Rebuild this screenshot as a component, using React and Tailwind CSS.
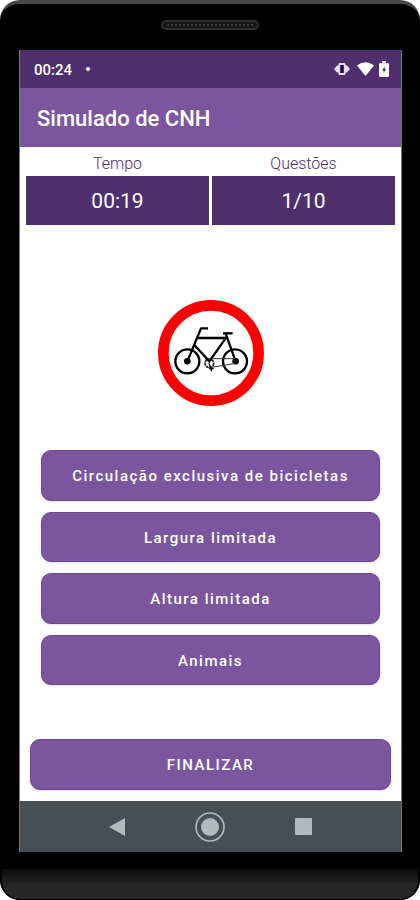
import React from "react";

const answers = [
  "Circulação exclusiva de bicicletas",
  "Largura limitada",
  "Altura limitada",
  "Animais",
];

function Speaker() {
  return (
    <div className="flex h-[50px] justify-center pt-5">
      <div className="flex h-[10px] w-[98px] items-center justify-center rounded-full border-2 border-[#303030] bg-[#161616]">
        <div className="w-[86px] border-t-2 border-dotted border-[#383838]" />
      </div>
    </div>
  );
}

function StatusBar() {
  return (
    <div className="flex h-[38px] items-center bg-[#4f2f6e] pr-3 pl-[14px] text-white">
      <span className="pt-0.5 text-[15px] font-medium">00:24</span>
      <span className="ml-[14px] h-1 w-1 rounded-full bg-white" />
      <svg className="ml-auto" width="16" height="14" viewBox="0 0 16 14" aria-hidden="true">
        <path d="M0 7l3-3.500h1.500V2.200Q4.500 1 5.700 1h4.600q1.200 0 1.200 1.200v1.300H13L16 7l-3 3.500h-1.500v1.300q0 1.200-1.200 1.200H5.700q-1.200 0-1.200-1.200v-1.300H3z" fill="#e6ddf0" />
        <rect x="6.200" y="3" width="3.600" height="8" fill="#26094f" />
      </svg>
      <svg className="ml-[7px]" width="17" height="14" viewBox="0 0 17 14" aria-hidden="true">
        <path d="M0 3.500Q8.500-3 17 3.500L8.500 14z" fill="#fff" />
      </svg>
      <svg className="ml-[5px]" width="10" height="16" viewBox="0 0 10 16" aria-hidden="true">
        <path d="M3 0h4v2h1.500Q10 2 10 3.500v11Q10 16 8.500 16h-7Q0 16 0 14.500v-11Q0 2 1.500 2H3z" fill="#fff" />
        <path d="M5.700 5.500L3 9.500h1.600v2.500l2.500-4H5.700z" fill="#4f2f6e" />
      </svg>
    </div>
  );
}

function Stat({ label, value }) {
  return (
    <div className="flex-1 text-center">
      <dt className="h-[29px] pt-[6px] text-base leading-[22px] font-light text-[#4f2f6e]">{label}</dt>
      <dd className="flex h-[49px] items-center justify-center bg-[#4f2f6e] pt-0.5 text-[21px] text-white">{value}</dd>
    </div>
  );
}

function BicycleSign() {
  return (
    <svg width="108" height="108" viewBox="0 0 324 324" role="img" aria-label="Placa com bicicleta" fill="none" stroke="#000">
      <circle cx="162" cy="162" r="143" stroke="#f00" strokeWidth="32" fill="#fff" />
      <circle cx="91" cy="187" r="36" strokeWidth="7" />
      <circle cx="234" cy="187" r="36" strokeWidth="7" />
      <circle cx="91" cy="187" r="10" fill="#000" stroke="none" />
      <circle cx="236" cy="187" r="10" fill="#000" stroke="none" />
      <path d="M91 187L132 88H153" strokeWidth="7" strokeLinejoin="round" />
      <path d="M121 117H207M112 138L157 187L210 112M206 104L236 187" strokeWidth="7" />
      <path d="M198 103H227" strokeWidth="7" />
      <path d="M168 179H236M164 205L236 193" strokeWidth="3" stroke="#333" />
      <circle cx="157" cy="193" r="13" strokeWidth="5" strokeDasharray="9 2" stroke="#222" />
      <path d="M156 193L164 217M157 209H170M146 180H154" strokeWidth="4" />
    </svg>
  );
}

function ActionButton({ children, className = "" }) {
  return (
    <button
      type="button"
      className={
        "w-full rounded-[10px] border border-[#6c4594] bg-[#7b569f] pt-0.5 text-[15px] font-medium tracking-widest text-white shadow-sm " +
        className
      }
    >
      {children}
    </button>
  );
}

function NavigationBar() {
  return (
    <nav className="flex h-[51px] items-center justify-center gap-[70px] bg-[#464f53]">
      <button type="button" aria-label="Voltar">
        <svg width="16" height="18" viewBox="0 0 16 18" aria-hidden="true">
          <path d="M0 9L16 0v18z" fill="#b3babc" />
        </svg>
      </button>
      <button type="button" aria-label="Início">
        <svg width="30" height="30" viewBox="0 0 30 30" aria-hidden="true">
          <circle cx="15" cy="15" r="14" fill="none" stroke="#b3babc" strokeWidth="1.600" />
          <circle cx="15" cy="15" r="9" fill="#b3babc" />
        </svg>
      </button>
      <button type="button" aria-label="Recentes">
        <svg width="17" height="17" viewBox="0 0 17 17" aria-hidden="true">
          <rect width="17" height="17" rx="1" fill="#b3babc" />
        </svg>
      </button>
    </nav>
  );
}

export default function App() {
  return (
    <div className="min-h-screen bg-white font-['Roboto',sans-serif]">
      <div className="flex min-h-screen flex-col overflow-hidden rounded-[20px] border-t-4 border-[#464646] bg-black">
        <div className="-mt-1">
          <Speaker />
        </div>
        <div className="mr-[18px] ml-[19px] flex flex-1 flex-col border-x border-[#777777] bg-white">
          <StatusBar />
          <header className="flex h-[59px] items-center bg-[#7b569f] px-[17px]">
            <h1 className="pt-0.5 text-[22px] font-medium text-white">Simulado de CNH</h1>
          </header>
          <main className="flex flex-1 flex-col">
            <dl className="mx-[6px] flex gap-[3px]">
              <Stat label="Tempo" value="00:19" />
              <Stat label="Questões" value="1/10" />
            </dl>
            <div className="flex flex-1 items-center justify-center pt-[30px]">
              <BicycleSign />
            </div>
            <div className="mx-[21px] grid h-[235px] grid-rows-4 gap-[11px]">
              {answers.map((answer) => (
                <ActionButton key={answer}>{answer}</ActionButton>
              ))}
            </div>
            <div className="mt-[54px] mb-[11px] px-[10px]">
              <ActionButton className="h-[51px]">FINALIZAR</ActionButton>
            </div>
          </main>
          <NavigationBar />
        </div>
        <div className="flex h-12 flex-col justify-end">
          <div className="h-[31px] rounded-b-[20px] border-x-2 border-b border-black bg-linear-to-b from-[#0c0c0c] via-[#242424] to-[#282828]" />
        </div>
      </div>
    </div>
  );
}
